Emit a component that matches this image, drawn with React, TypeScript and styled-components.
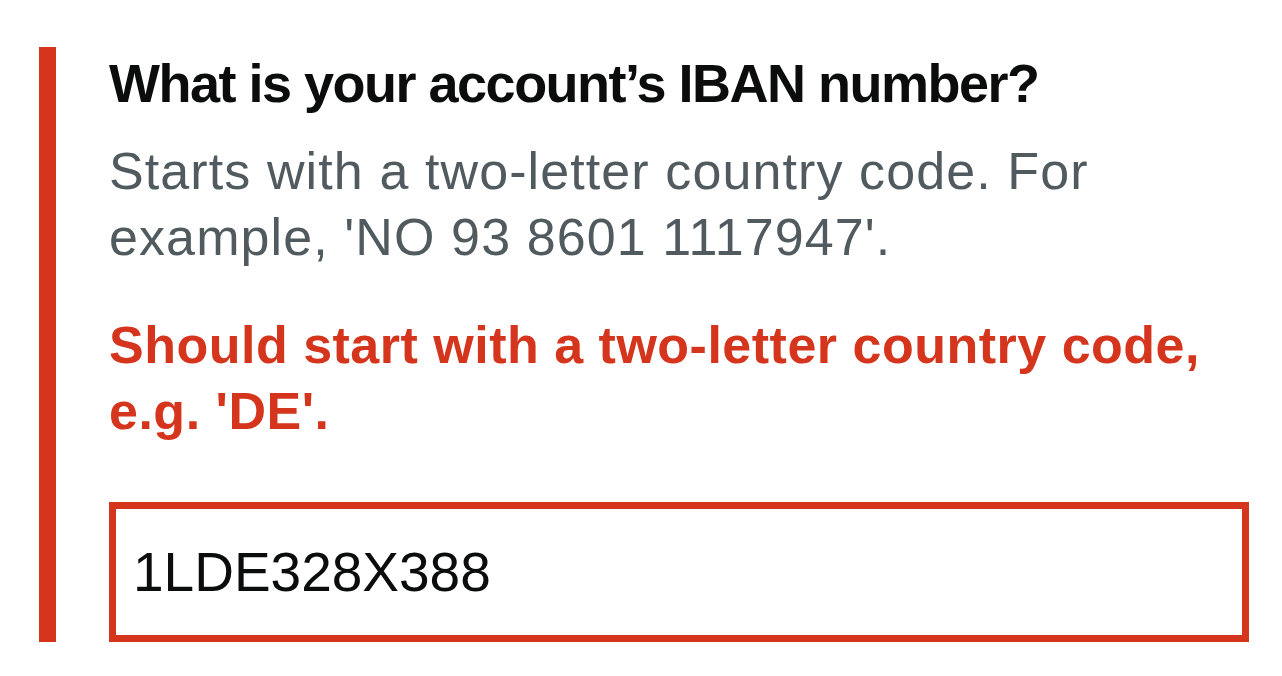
import styled, { createGlobalStyle } from 'styled-components';

const GlobalStyle = createGlobalStyle`
    html, body {
        margin: 0;
        padding: 0;
        background: #ffffff;
    }
    body {
        font-family: "Liberation Sans", Arial, sans-serif;
        color: #0b0c0c;
    }
`;

const Page = styled.main`
    padding: 47px 0 0 39px;
    width: 1210px;
`;

const FormGroup = styled.div<{ $error?: boolean }>`
    display: flex;
    flex-direction: column;
    border-left: 17px solid ${(p) => (p.$error ? '#d4351c' : 'transparent')};
    padding-left: 53px;
    width: 1140px;
`;

const Label = styled.label`
    font-size: 54px;
    font-weight: 700;
    line-height: 72px;
    letter-spacing: -1.5px;
    color: #0b0c0c;
`;

const Hint = styled.div`
    margin-top: 19px;
    font-size: 52px;
    line-height: 66px;
    letter-spacing: 1.1px;
    color: #505a5f;
`;

const ErrorMessage = styled.p`
    margin: 42px 0 0;
    font-size: 52px;
    font-weight: 700;
    line-height: 66px;
    letter-spacing: 0.5px;
    color: #d4351c;
`;

const Input = styled.input<{ $error?: boolean }>`
    margin-top: 58px;
    box-sizing: border-box;
    width: 1140px;
    height: 140px;
    padding: 0 17px;
    border: 7px solid ${(p) => (p.$error ? '#d4351c' : '#0b0c0c')};
    border-radius: 0;
    outline: none;
    background: #ffffff;
    font-family: "Liberation Sans", Arial, sans-serif;
    font-size: 55px;
    color: #0b0c0c;
`;

export default function App() {
    return (
        <>
            <GlobalStyle />
            <Page>
                <FormGroup $error>
                    <Label htmlFor="iban">What is your account’s IBAN number?</Label>
                    <Hint id="iban-hint">Starts with a two-letter country code. For example, 'NO 93 8601 1117947'.</Hint>
                    <ErrorMessage id="iban-error">Should start with a two-letter country code, e.g. 'DE'.</ErrorMessage>
                    <Input id="iban" $error defaultValue="1LDE328X388" aria-describedby="iban-hint iban-error" />
                </FormGroup>
            </Page>
        </>
    );
}
